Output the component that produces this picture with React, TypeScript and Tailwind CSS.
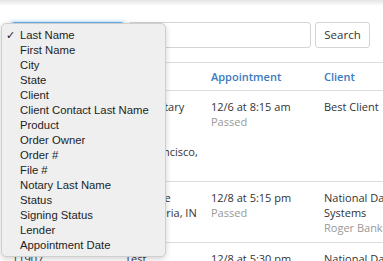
const options = [
  "Last Name", "First Name", "City", "State", "Client", "Client Contact Last Name",
  "Product", "Order Owner", "Order #", "File #", "Notary Last Name", "Status",
  "Signing Status", "Lender", "Appointment Date",
];

const rows = [
  {
    id: "11902", notary: ["Test Notary", "", "", "San Francisco,", "CA"],
    date: "12/6 at 8:15 am", status: "Passed", client: "Best Client", contact: "",
  },
  {
    id: "11905", notary: ["Jane Doe", "Alexandria, IN", ""],
    date: "12/8 at 5:15 pm", status: "Passed", client: "National Data Systems", contact: "Roger Banker",
  },
  {
    id: "11907", notary: ["Test"],
    date: "12/8 at 5:30 pm", status: "Passed", client: "National Data Systems", contact: "",
  },
];

export default function App() {
  return (
    <div className="relative w-[383px] h-[261px] overflow-hidden bg-white text-[#333]" style={{ fontFamily: '"Open Sans", sans-serif' }}>
      <div className="h-[6px] bg-gradient-to-b from-[#e4e4e4] to-white" />

      {/* search bar */}
      <div className="flex gap-[3px] pl-[10px] mt-[16px] h-[26px]">
        <div className="w-[115px] rounded-[4px] border border-[#66afe9] shadow-[0_0_4px_rgba(102,175,233,0.6)]" />
        <div className="w-[183px] rounded-[3px] border border-[#d4d4d4]" />
        <button className="ml-[1px] w-[55px] rounded-[3px] border border-[#d4d4d4] bg-white text-[11.5px] text-[#333]">
          Search
        </button>
      </div>

      {/* table */}
      <table className="mt-[14px] ml-[4px] w-[480px] table-fixed border-collapse text-[11px] leading-[15px]">
        <colgroup>
          <col className="w-[113px]" />
          <col className="w-[86px]" />
          <col className="w-[113px]" />
          <col className="w-[100px]" />
          <col />
        </colgroup>
        <thead>
          <tr className="border-t border-b border-[#dddddd] h-[28px] text-left text-[#3a7bbf]">
            <th className="px-2 font-semibold">Order #</th>
            <th className="px-2 font-semibold">Notary</th>
            <th className="px-2 font-semibold">Appointment</th>
            <th className="px-2 font-semibold">Client</th>
            <th className="px-2 font-semibold">Status</th>
          </tr>
        </thead>
        <tbody>
          {rows.map((r) => (
            <tr key={r.id} className="border-b border-[#dddddd] align-top">
              <td className="px-2 pt-2 pb-[7px]">{r.id}</td>
              <td className="px-2 pt-2 pb-[7px]">
                {r.notary.map((n, i) => (
                  <div key={i} className="h-[15px] whitespace-nowrap">{n}</div>
                ))}
              </td>
              <td className="px-2 pt-2 pb-[7px]">
                <div>{r.date}</div>
                <div className="text-[#999]">{r.status}</div>
              </td>
              <td className="px-2 pt-2 pb-[7px]">
                <div>{r.client}</div>
                {r.contact && <div className="text-[#999] whitespace-nowrap">{r.contact}</div>}
              </td>
              <td className="px-2 pt-2 pb-[7px]">Active</td>
            </tr>
          ))}
        </tbody>
      </table>

      {/* open select menu */}
      <div
        className="absolute left-[1px] top-[23px] w-[165px] rounded-[5px] border border-[#cfcfcf] bg-[#efefef] pt-[4px] pb-[3px] shadow-[0_2px_6px_rgba(0,0,0,0.18)] text-[11.3px] text-[#1e1e1e]"
        style={{ fontFamily: '"Liberation Sans", Arial, sans-serif' }}
      >
        {options.map((o, i) => (
          <div key={o} className="relative h-[15px] leading-[15px] pl-[18px]">
            {i === 0 && <span className="absolute left-[4px] top-0">✓</span>}
            {o}
          </div>
        ))}
      </div>
    </div>
  );
}
